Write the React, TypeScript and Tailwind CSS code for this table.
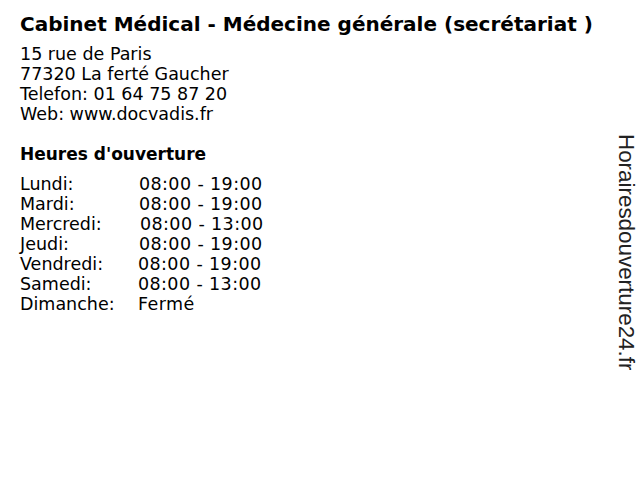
const hours: { day: string; time: string; offset: string }[] = [
  { day: "Lundi:", time: "08:00 - 19:00", offset: "pl-[1px]" },
  { day: "Mardi:", time: "08:00 - 19:00", offset: "pl-[1px]" },
  { day: "Mercredi:", time: "08:00 - 13:00", offset: "pl-[2px]" },
  { day: "Jeudi:", time: "08:00 - 19:00", offset: "pl-[1px]" },
  { day: "Vendredi:", time: "08:00 - 19:00", offset: "pl-0" },
  { day: "Samedi:", time: "08:00 - 13:00", offset: "pl-0" },
  { day: "Dimanche:", time: "Fermé", offset: "pl-0" },
];

export default function App() {
  return (
    <div className="w-[640px] h-[480px] bg-white flex text-black font-['DejaVu_Sans',Verdana,sans-serif]">
      <div className="flex-1 pl-[20px] pt-[10px]">
        <h1 className="text-[20px] font-bold leading-[28px] whitespace-nowrap">
          Cabinet Médical - Médecine générale (secrétariat )
        </h1>
        <div className="mt-[6px] text-[17.5px] leading-[20px]">
          <p>15 rue de Paris</p>
          <p>77320 La ferté Gaucher</p>
          <p>Telefon: 01 64 75 87 20</p>
          <p>Web: www.docvadis.fr</p>
        </div>

        <h2 className="mt-[20px] text-[17px] font-bold leading-[20px]">Heures d'ouverture</h2>
        <div className="mt-[10px] text-[17.5px] leading-[20px]">
          {hours.map((h) => (
            <div key={h.day} className="flex">
              <span className="w-[118px]">{h.day}</span>
              <span className={`${h.offset} tracking-[0.4px]`}>{h.time}</span>
            </div>
          ))}
        </div>
      </div>

      <div className="w-[40px] flex pt-[134px] pl-[14px]">
        <span className="[writing-mode:vertical-rl] text-[22.4px] leading-[24px] text-[#222] font-['Liberation_Sans',Arial,sans-serif]">
          Horairesdouverture24.fr
        </span>
      </div>
    </div>
  );
}
